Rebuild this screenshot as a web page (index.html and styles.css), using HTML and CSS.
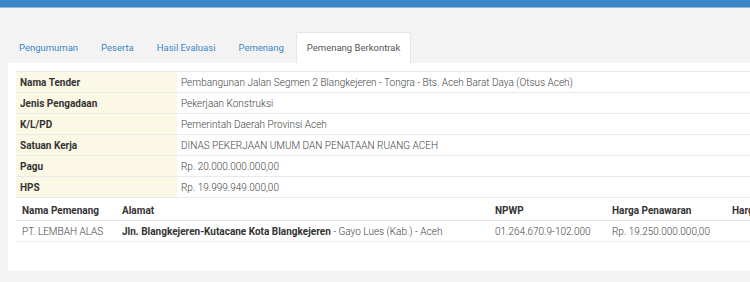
FILE: index.html
```html
<!DOCTYPE html>
<html>
<head>
<meta charset="utf-8">
<link rel="stylesheet" href="styles.css">
</head>
<body>
<div class="topbar"></div>
<div class="page">
  <ul class="tabs">
    <li class="tab">Pengumuman</li>
    <li class="tab">Peserta</li>
    <li class="tab">Hasil Evaluasi</li>
    <li class="tab">Pemenang</li>
    <li class="tab active">Pemenang Berkontrak</li>
  </ul>
  <div class="panel">
    <table class="info">
      <tr><th>Nama Tender</th><td>Pembangunan Jalan Segmen 2 Blangkejeren - Tongra - Bts. Aceh Barat Daya (Otsus Aceh)</td></tr>
      <tr><th>Jenis Pengadaan</th><td>Pekerjaan Konstruksi</td></tr>
      <tr><th>K/L/PD</th><td>Pemerintah Daerah Provinsi Aceh</td></tr>
      <tr><th>Satuan Kerja</th><td>DINAS PEKERJAAN UMUM DAN PENATAAN RUANG ACEH</td></tr>
      <tr><th>Pagu</th><td>Rp. 20.000.000.000,00</td></tr>
      <tr><th>HPS</th><td>Rp. 19.999.949.000,00</td></tr>
    </table>
    <table class="winners">
      <tr>
        <th class="c1">Nama Pemenang</th>
        <th class="c2">Alamat</th>
        <th class="c3">NPWP</th>
        <th class="c4">Harga Penawaran</th>
        <th class="c5">Harga Terkoreksi</th>
      </tr>
      <tr>
        <td>PT. LEMBAH ALAS</td>
        <td><b>Jln. Blangkejeren-Kutacane Kota Blangkejeren</b> - Gayo Lues (Kab.) - Aceh</td>
        <td>01.264.670.9-102.000</td>
        <td>Rp. 19.250.000.000,00</td>
        <td></td>
      </tr>
    </table>
  </div>
</div>
</body>
</html>
```
FILE: styles.css
```css
html, body {
  margin: 0;
  padding: 0;
  background: #f3f3f3;
  overflow: hidden;
  font-family: Roboto, "Liberation Sans", sans-serif;
  font-size: 10px;
  color: #333;
}
.topbar {
  height: 7px;
  background: #3c87c8;
  border-bottom: 1px solid #8fb9dd;
}
.page {
  padding: 24px 0 0 8px;
  width: 1000px;
}
.tabs {
  list-style: none;
  margin: 0;
  padding: 0;
  display: flex;
  height: 31px;
}
.tab {
  padding: 0 10px;
  margin-right: 1px;
  line-height: 30px;
  font-size: 9.5px;
  color: #3a87c6;
  border: 1px solid transparent;
  border-bottom: none;
  white-space: nowrap;
}
.tab.active {
  background: #fff;
  color: #555;
  border-color: #e6e6e6;
  border-radius: 2px 2px 0 0;
}
.panel {
  background: #fff;
  width: 900px;
  padding: 8px 0 29px 8px;
}
table {
  border-collapse: collapse;
  table-layout: fixed;
}
.info {
  width: 900px;
}
.info th, .info td {
  border-top: 1px solid #eaeaea;
  height: 20px;
  padding: 0 4px;
  text-align: left;
  vertical-align: middle;
  white-space: nowrap;
}
.info tr:last-child th, .info tr:last-child td {
  border-bottom: 1px solid #eaeaea;
}
.info th {
  width: 153px;
  background: #fcf8e6;
  font-weight: bold;
  color: #333;
}
.info td {
  font-weight: 300;
  color: #444;
}
.winners {
  width: 900px;
  margin-top: 2px;
}
.winners th, .winners td {
  text-align: left;
  padding: 0 6px;
  height: 20px;
  white-space: nowrap;
}
.winners th {
  font-weight: bold;
  border-bottom: 1px solid #e3e3e3;
}
.winners td {
  font-weight: 300;
  color: #444;
  border-bottom: 1px solid #f0f0f0;
}
.winners td b {
  font-weight: bold;
  color: #333;
}
.c1 { width: 88px; }
.c2 { width: 361px; }
.c3 { width: 105px; }
.c4 { width: 108px; }
```
